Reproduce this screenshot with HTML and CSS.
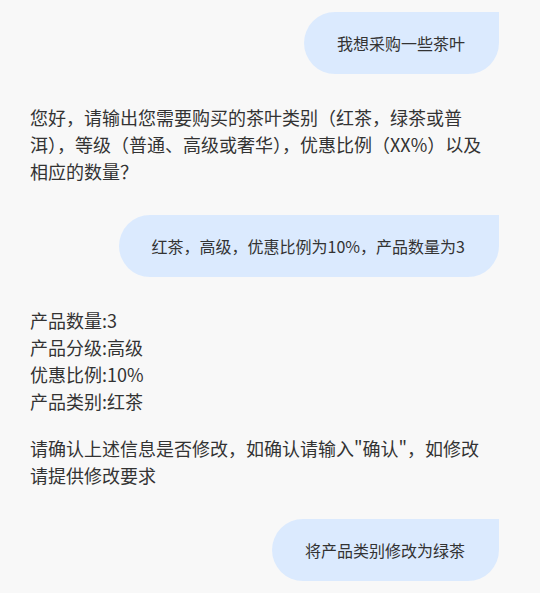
FILE: index.html
```html
<!DOCTYPE html>
<html lang="zh-CN">
<head>
  <meta charset="UTF-8">
  <title>茶叶采购</title>
  <link rel="stylesheet" href="styles.css">
</head>
<body>

  <div class="chat">
    <div class="msg user">
      <div class="bubble">我想采购一些茶叶</div>
    </div>

    <div class="msg bot">
      <p>您好，请输出您需要购买的茶叶类别（红茶，绿茶或普洱），等级（普通、高级或奢华），优惠比例（XX%）以及相应的数量？</p>
    </div>

    <div class="msg user">
      <div class="bubble">红茶，高级，优惠比例为10%，产品数量为3</div>
    </div>

    <div class="msg bot">
      <p>产品数量:3<br>产品分级:高级<br>优惠比例:10%<br>产品类别:红茶</p>
      <p>请确认上述信息是否修改，如确认请输入"确认"，如修改请提供修改要求</p>
    </div>

    <div class="msg user">
      <div class="bubble">将产品类别修改为绿茶</div>
    </div>
  </div>

</body>
</html>
```

FILE: styles.css
```css
body {
  margin: 0;
  background-color: #f8f8f8;
  font-family: "Noto Sans CJK SC", "Noto Sans", sans-serif;
  color: #333;
}
.chat {
  padding: 12px 41px 0 30px;
  display: flex;
  flex-direction: column;
  gap: 30px;
}
.msg.user {
  display: flex;
  justify-content: flex-end;
}
.msg.bot {
  padding-right: 7px;
}
.bubble {
  background-color: #dbeafe;
  font-size: 16px;
  line-height: 24px;
  padding: 19px 34px 19px 33px;
  border-radius: 31px 0 31px 31px;
}
.msg.bot p {
  margin: 0;
  font-size: 18px;
  line-height: 27px;
}
.msg.bot p + p {
  margin-top: 20px;
}
```
